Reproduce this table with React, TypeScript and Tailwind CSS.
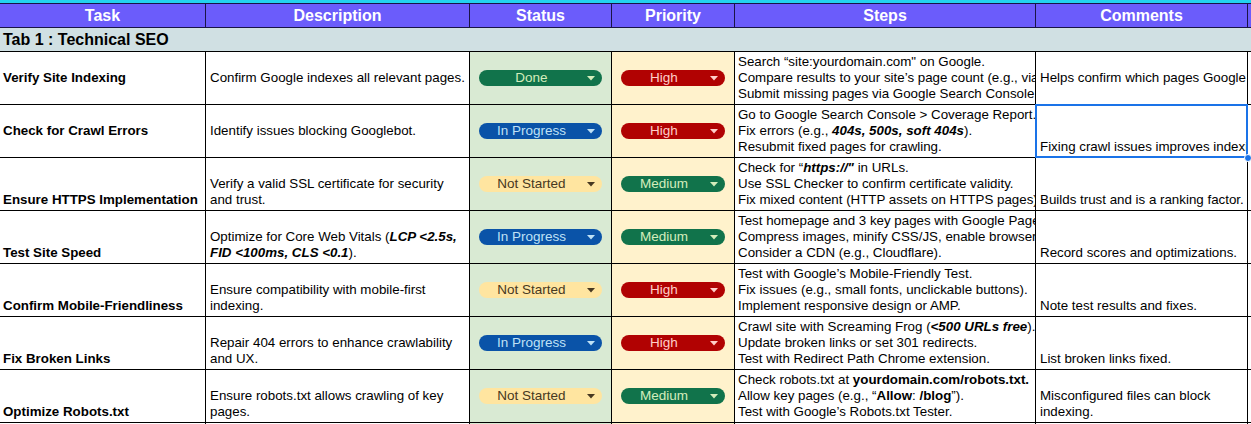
import React from "react";

type Chip = { label: string; bg: string; fg: string };

const DONE: Chip = { label: "Done", bg: "bg-[#11734b]", fg: "text-[#d4edbc]" };
const PROG: Chip = { label: "In Progress", bg: "bg-[#0a53a8]", fg: "text-[#bfe1f6]" };
const NOTS: Chip = { label: "Not Started", bg: "bg-[#ffe5a0]", fg: "text-[#473821]" };
const HIGH: Chip = { label: "High", bg: "bg-[#b10202]", fg: "text-[#ffcfc9]" };
const MED: Chip = { label: "Medium", bg: "bg-[#11734b]", fg: "text-[#d4edbc]" };

const COLS = "grid grid-cols-[206px_264px_142px_123px_301px_212px_1fr]";

function ChipView({ chip, w }: { chip: Chip; w: string }) {
  return (
    <div className={`relative ${w} h-4 rounded-full ${chip.bg} ${chip.fg} flex items-center`}>
      <div className="flex-1 pr-[18px] text-center text-[13.5px] leading-4">{chip.label}</div>
      <svg className="absolute right-[7px] top-[6px]" width="8" height="5" viewBox="0 0 8 5">
        <polygon points="0,0 8,0 4,4.5" fill="currentColor" />
      </svg>
    </div>
  );
}

const BI = ({ children }: { children: React.ReactNode }) => (
  <b className="font-bold italic">{children}</b>
);

type Row = {
  task: string;
  desc: React.ReactNode;
  status: Chip;
  prio: Chip;
  steps: React.ReactNode[];
  comment: React.ReactNode;
  mid?: boolean;
  commentMid?: boolean;
  selected?: boolean;
};

const rows: Row[] = [
  {
    task: "Verify Site Indexing",
    desc: "Confirm Google indexes all relevant pages.",
    status: DONE,
    prio: HIGH,
    steps: [
      <>Search “site:yourdomain.com" on Google.</>,
      <>Compare results to your site’s page count (e.g., via Google Search Console).</>,
      <>Submit missing pages via Google Search Console.</>,
    ],
    comment: "Helps confirm which pages Google are indexed.",
    mid: true,
    commentMid: true,
  },
  {
    task: "Check for Crawl Errors",
    desc: "Identify issues blocking Googlebot.",
    status: PROG,
    prio: HIGH,
    steps: [
      <>Go to Google Search Console &gt; Coverage Report.</>,
      <>
        Fix errors (e.g., <BI>404s, 500s, soft 404s</BI>).
      </>,
      <>Resubmit fixed pages for crawling.</>,
    ],
    comment: "Fixing crawl issues improves indexing.",
    mid: true,
    selected: true,
  },
  {
    task: "Ensure HTTPS Implementation",
    desc: (
      <>
        Verify a valid SSL certificate for security
        <br />
        and trust.
      </>
    ),
    status: NOTS,
    prio: MED,
    steps: [
      <>
        Check for “<BI>https://"</BI> in URLs.
      </>,
      <>Use SSL Checker to confirm certificate validity.</>,
      <>Fix mixed content (HTTP assets on HTTPS pages).</>,
    ],
    comment: "Builds trust and is a ranking factor.",
  },
  {
    task: "Test Site Speed",
    desc: (
      <>
        Optimize for Core Web Vitals (<BI>LCP &lt;2.5s,</BI>
        <br />
        <BI>FID &lt;100ms, CLS &lt;0.1</BI>).
      </>
    ),
    status: PROG,
    prio: MED,
    steps: [
      <>Test homepage and 3 key pages with Google PageSpeed Insights.</>,
      <>Compress images, minify CSS/JS, enable browser caching.</>,
      <>Consider a CDN (e.g., Cloudflare).</>,
    ],
    comment: "Record scores and optimizations.",
  },
  {
    task: "Confirm Mobile-Friendliness",
    desc: (
      <>
        Ensure compatibility with mobile-first
        <br />
        indexing.
      </>
    ),
    status: NOTS,
    prio: HIGH,
    steps: [
      <>Test with Google’s Mobile-Friendly Test.</>,
      <>Fix issues (e.g., small fonts, unclickable buttons).</>,
      <>Implement responsive design or AMP.</>,
    ],
    comment: "Note test results and fixes.",
  },
  {
    task: "Fix Broken Links",
    desc: (
      <>
        Repair 404 errors to enhance crawlability
        <br />
        and UX.
      </>
    ),
    status: PROG,
    prio: HIGH,
    steps: [
      <>
        Crawl site with Screaming Frog (<BI>&lt;500 URLs free</BI>).
      </>,
      <>Update broken links or set 301 redirects.</>,
      <>Test with Redirect Path Chrome extension.</>,
    ],
    comment: "List broken links fixed.",
  },
  {
    task: "Optimize Robots.txt",
    desc: (
      <>
        Ensure robots.txt allows crawling of key
        <br />
        pages.
      </>
    ),
    status: NOTS,
    prio: MED,
    steps: [
      <>
        Check robots.txt at <b className="font-bold">yourdomain.com/robots.txt.</b>
      </>,
      <>
        Allow key pages (e.g., “<b className="font-bold">Allow</b>: <b className="font-bold">/blog</b>”).
      </>,
      <>Test with Google’s Robots.txt Tester.</>,
    ],
    comment: (
      <>
        Misconfigured files can block
        <br />
        indexing.
      </>
    ),
  },
];

const headers = ["Task", "Description", "Status", "Priority", "Steps", "Comments", ""];

export default function App() {
  return (
    <div
      className="w-[1251px] h-[424px] overflow-hidden bg-white text-black text-[13.33px] leading-4"
      style={{ fontFamily: '"Liberation Sans", Arial, sans-serif' }}
    >
      <div className="h-[3px] bg-[#22d3ee]" />
      {/* header */}
      <div className={`${COLS} h-[25px] bg-[#6b5cfb] border-y border-[#1a1446]`}>
        {headers.map((h, i) => (
          <div
            key={i}
            className={`flex items-center justify-center text-white font-bold text-[16px] ${
              i < 6 ? "border-r border-[#1a1446]" : ""
            }`}
          >
            {h}
          </div>
        ))}
      </div>
      {/* section */}
      <div className="h-[24px] bg-[#d0e0e3] border-b border-black flex items-center pl-[3px] font-bold text-[16px]">
        Tab 1 : Technical SEO
      </div>
      {rows.map((r, idx) => (
        <div key={idx} className={`${COLS} h-[53px] border-b border-black`}>
          <div
            className={`border-r border-black px-[3px] py-[2px] flex font-bold overflow-hidden whitespace-nowrap ${
              r.mid ? "items-center" : "items-end"
            }`}
          >
            {r.task}
          </div>
          <div
            className={`border-r border-black px-[4px] py-[2px] flex overflow-hidden ${
              r.mid ? "items-center" : "items-end"
            }`}
          >
            <div className="whitespace-nowrap">{r.desc}</div>
          </div>
          <div className="border-r border-black bg-[#d9ead3] flex items-center justify-center">
            <ChipView chip={r.status} w="w-[123px]" />
          </div>
          <div className="border-r border-black bg-[#fff2cc] flex items-center justify-center">
            <ChipView chip={r.prio} w="w-[104px]" />
          </div>
          <div className="border-r border-black px-[3px] py-[2px] flex items-end overflow-hidden">
            <div className="whitespace-nowrap">
              {r.steps.map((s, j) => (
                <div key={j}>{s}</div>
              ))}
            </div>
          </div>
          <div className="relative border-r border-black">
            <div
              className={`absolute inset-0 px-[4px] py-[2px] flex overflow-hidden whitespace-nowrap ${
                r.commentMid ? "items-center" : "items-end"
              }`}
            >
              <div>{r.comment}</div>
            </div>
            {r.selected && (
              <>
                <div className="absolute top-[-1px] left-[-1px] right-[-1px] bottom-[-1px] border-2 border-[#1a73e8]" />
                <div className="absolute right-[-5px] bottom-[-5px] w-[8px] h-[8px] rounded-full bg-[#1a73e8] border border-white z-10" />
              </>
            )}
          </div>
          <div />
        </div>
      ))}
      <div className={`${COLS} h-[10px]`}>
        <div className="border-r border-black" />
        <div className="border-r border-black" />
        <div className="border-r border-black bg-[#d9ead3]" />
        <div className="border-r border-black bg-[#fff2cc]" />
        <div className="border-r border-black" />
        <div className="border-r border-black" />
        <div />
      </div>
    </div>
  );
}
